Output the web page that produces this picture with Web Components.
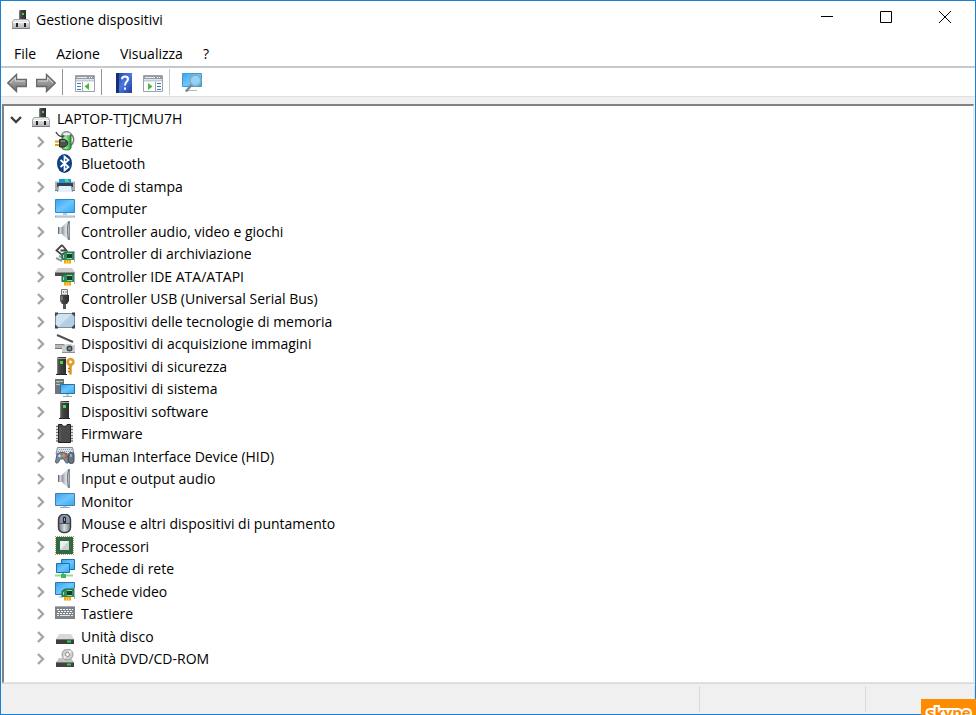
<!DOCTYPE html>
<html lang="it">
<head>
<meta charset="utf-8">
<title>Gestione dispositivi</title>
<style>
  html, body { height: 100%; margin: 0; }
  body { font: 14px/20px "Open Sans", "Noto Sans", sans-serif; color: #000; background: #fff; overflow: hidden; }
</style>
</head>
<body>

<dm-window>
  <dm-title-bar slot="title">Gestione dispositivi</dm-title-bar>
  <dm-menu-bar slot="menu">
    <dm-menu-item>File</dm-menu-item>
    <dm-menu-item>Azione</dm-menu-item>
    <dm-menu-item>Visualizza</dm-menu-item>
    <dm-menu-item>?</dm-menu-item>
  </dm-menu-bar>
  <dm-toolbar slot="toolbar">
    <dm-tool icon="back" label="Indietro"></dm-tool>
    <dm-tool icon="forward" label="Avanti"></dm-tool>
    <dm-separator></dm-separator>
    <dm-tool icon="pane-left" label="Mostra/Nascondi albero"></dm-tool>
    <dm-separator></dm-separator>
    <dm-tool icon="help" label="Guida"></dm-tool>
    <dm-tool icon="pane-right" label="Mostra/Nascondi azioni"></dm-tool>
    <dm-separator light></dm-separator>
    <dm-tool icon="scan" label="Rileva modifiche hardware"></dm-tool>
  </dm-toolbar>
  <dm-tree>
    <dm-node icon="root" open>LAPTOP-TTJCMU7H
      <dm-node slot="items" icon="battery">Batterie</dm-node>
      <dm-node slot="items" icon="bluetooth">Bluetooth</dm-node>
      <dm-node slot="items" icon="printer">Code di stampa</dm-node>
      <dm-node slot="items" icon="computer">Computer</dm-node>
      <dm-node slot="items" icon="speaker">Controller audio, video e giochi</dm-node>
      <dm-node slot="items" icon="storage">Controller di archiviazione</dm-node>
      <dm-node slot="items" icon="ide">Controller IDE ATA/ATAPI</dm-node>
      <dm-node slot="items" icon="usb">Controller USB (Universal Serial Bus)</dm-node>
      <dm-node slot="items" icon="memory">Dispositivi delle tecnologie di memoria</dm-node>
      <dm-node slot="items" icon="imaging">Dispositivi di acquisizione immagini</dm-node>
      <dm-node slot="items" icon="security">Dispositivi di sicurezza</dm-node>
      <dm-node slot="items" icon="system">Dispositivi di sistema</dm-node>
      <dm-node slot="items" icon="software">Dispositivi software</dm-node>
      <dm-node slot="items" icon="firmware">Firmware</dm-node>
      <dm-node slot="items" icon="hid">Human Interface Device (HID)</dm-node>
      <dm-node slot="items" icon="speaker">Input e output audio</dm-node>
      <dm-node slot="items" icon="monitor">Monitor</dm-node>
      <dm-node slot="items" icon="mouse">Mouse e altri dispositivi di puntamento</dm-node>
      <dm-node slot="items" icon="cpu">Processori</dm-node>
      <dm-node slot="items" icon="network">Schede di rete</dm-node>
      <dm-node slot="items" icon="video">Schede video</dm-node>
      <dm-node slot="items" icon="keyboard">Tastiere</dm-node>
      <dm-node slot="items" icon="disk">Unità disco</dm-node>
      <dm-node slot="items" icon="dvd">Unità DVD/CD-ROM</dm-node>
    </dm-node>
  </dm-tree>
  <dm-status-bar slot="status"></dm-status-bar>
</dm-window>
<dm-badge>skype</dm-badge>

<script>
// gradients shared by the icons, copied into each svg
const DEFS = `<defs>
  <linearGradient id="sky" x1="0" y1="0" x2="1" y2="1"><stop offset="0" stop-color="#3aa2ee"/><stop offset=".5" stop-color="#6cc6ff"/><stop offset="1" stop-color="#35a7f4"/></linearGradient>
  <linearGradient id="metal" x1="0" y1="0" x2="0" y2="1"><stop offset="0" stop-color="#f2f2f2"/><stop offset="1" stop-color="#b4b4b8"/></linearGradient>
  <linearGradient id="side" x1="0" y1="0" x2="1" y2="0"><stop offset="0" stop-color="#6c7680"/><stop offset=".5" stop-color="#d4d9de"/><stop offset="1" stop-color="#767f88"/></linearGradient>
  <linearGradient id="cone" x1="0" y1="0" x2="1" y2="0"><stop offset="0" stop-color="#8d959c"/><stop offset=".5" stop-color="#dfe3e6"/><stop offset="1" stop-color="#a3abb2"/></linearGradient>
  <linearGradient id="dark" x1="0" y1="0" x2="1" y2="0"><stop offset="0" stop-color="#6a6a6a"/><stop offset=".3" stop-color="#454545"/><stop offset="1" stop-color="#2c2c2c"/></linearGradient>
  <linearGradient id="leaf" x1="0" y1="0" x2="1" y2="0"><stop offset="0" stop-color="#2fae3a"/><stop offset=".4" stop-color="#9af59a"/><stop offset="1" stop-color="#259338"/></linearGradient>
  <linearGradient id="arrow" x1="0" y1="0" x2="0" y2="1"><stop offset="0" stop-color="#c4c4c4"/><stop offset="1" stop-color="#6d6d6d"/></linearGradient>
  <linearGradient id="navy" x1="0" y1="0" x2="1" y2="1"><stop offset="0" stop-color="#1e3f9c"/><stop offset=".5" stop-color="#4a78e0"/><stop offset="1" stop-color="#1d3ca0"/></linearGradient>
</defs>`;

const CARD = `<path d="M7 10 10 8H19V16H7Z" fill="#2f8d57"/><path d="M7 16 7 10 10 8H19" fill="none" stroke="#1d6a3e"/><path d="M19.500 7v11" stroke="#a9afb2"/><path d="M12 10H17V14H12Z" fill="#173d2c"/><path d="M8.500 11v3M12 9.500h5M12 14.500h5" stroke="#8fdcaa"/><path d="M9 16h7v3.500H9z" fill="#f3a712"/><path d="M11.500 16.500v2.500M13.500 16.500v2.500" stroke="#ffd24a"/>`;

const TOWER = `<path d="M5 1 6 0H14V17H5Z" fill="url(#dark)"/><path d="M5.500 1.500H14" stroke="#a2a2a2"/><path d="M8 4h3v3H8z" fill="#37e23c"/><path d="M5.500 2V16" stroke="#7a7a7a"/><path d="M4 17.500H15" stroke="#25252b"/>`;

const PANE = `<path d="M.5 2.500H19.500V18.500H.5Z" fill="#fff" stroke="#9aa2aa"/><path d="M1 3H19V6H1Z" fill="#929ba4"/><path d="M2 4.500h10" stroke="#e8edf2"/><path d="M14 4.500h1M16 4.500h1" stroke="#fff"/><path d="M1 7.500H19" stroke="#c3cad0" stroke-width="2"/>`;

const ICONS = {
  root: `<path d="M8 1 9 0H15V10H8Z" fill="url(#dark)"/><path d="M8.500 1V10" stroke="#777"/><path d="M11 3h2v2h-2z" fill="#36df37"/><path d="M3 9.500H17L18.500 12V18.500H1.500V12Z" fill="url(#metal)" stroke="#a5a5a9"/><path d="M1 18.500H19" stroke="#7c7c84"/><path d="M2 12.500H18" stroke="#fafafa"/><path d="M6 13v4M14 13v4" stroke="#222" stroke-width="2"/>`,
  battery: `<path d="M15 3c5 2 5 10-1 12" fill="none" stroke="#777" stroke-width="1.500"/><path d="M7 3C7 0 16 0 16 3V17C16 19.500 7 19.500 7 17Z" fill="url(#leaf)" stroke="#247331"/><ellipse cx="11.500" cy="3" rx="4" ry="2" fill="#eee" stroke="#999"/><path d="M1 1C3 5 6 6 9 5" fill="none" stroke="#444" stroke-width="1.500"/><path d="M0 10.500H5M0 14H5" stroke="#d4a514" stroke-width="2"/><path d="M4.500 8.500H9C14 9 14 15 9 16H4.500Z" fill="#505050" stroke="#2c2c2c"/><path d="M6 10H10" stroke="#aaa"/>`,
  bluetooth: `<ellipse cx="9.500" cy="9.500" rx="7.500" ry="9.500" fill="#12387a"/><ellipse cx="9.500" cy="9" rx="6.500" ry="8" fill="#0f4489"/><path d="M5.500 6 13.500 13 9.500 16.500V2.500L13.500 6 5.500 13" fill="none" stroke="#fff" stroke-width="1.700"/>`,
  printer: `<path d="M0 5H4V15H0ZM16 5H20V15H16Z" fill="#a9afb4"/><path d="M0 5.500H4M16 5.500H20" stroke="#d8dcdf"/><path d="M4 3H16V8H4Z" fill="#1696ec"/><path d="M10 3h3l1 3h-4z" fill="#55da70"/><path d="M2 7H18V11H2Z" fill="#3a4046"/><path d="M4 10H16L17 16H3Z" fill="#e3f1fa"/><path d="M4 10.500H3.500L2.500 16M16.500 10.500 17.500 16" fill="none" stroke="#8fa6b5"/><path d="M0 14.500H3M17 14.500H20" stroke="#747c83"/>`,
  computer: `<path d="M.5.500H19.500V13.500H.5Z" fill="url(#sky)" stroke="#328bc8"/><path d="M8 14H12V16H8Z" fill="#b9cbd8"/><path d="M0 17.500H20" stroke="#8fabbe" stroke-width="2"/><path d="M1 17H19" stroke="#d5e7f2"/>`,
  monitor: `<path d="M.5 2.500H19.500V14.500H.5Z" fill="url(#sky)" stroke="#487fa8"/><path d="M8 15H12V16H8Z" fill="#b9cbd8"/><path d="M5 16.500H15" stroke="#91adc0"/>`,
  speaker: `<path d="M3 6H8V13H3Z" fill="url(#side)"/><path d="M3.500 6V13" stroke="#6a7178"/><path d="M7 6 13 0H15V19H13L7 13Z" fill="url(#cone)"/><path d="M14 0C12 5 12 14 14 19" fill="none" stroke="#69727a"/><path d="M14.500 0V19" stroke="#868e95"/>`,
  storage: `<path d="M7 1 1.500 6.500 7 11 9 9.500M5.500 6.500H11.500L7 1" fill="none" stroke="#464646" stroke-width="1.800"/><path d="M1 14 7 17M4 12l4 2" stroke="#9a9a9a" stroke-width="2"/><g>${CARD}</g>`,
  ide: `<path d="M3 2H17L20 6H0Z" fill="#cfcfcf"/><path d="M0 6H20V10H0Z" fill="#4c4c4c"/><path d="M0 6.500H20" stroke="#8c8c8c"/><g>${CARD}</g>`,
  usb: `<path d="M6.500.500H12.500V6H6.500Z" fill="#ececec" stroke="#777"/><path d="M8 3h1M10.500 3h1" stroke="#333"/><path d="M5 6H14V12L12 15H7L5 12Z" fill="url(#dark)"/><path d="M9.500 15V20" stroke="#555" stroke-width="3"/><path d="M7 7V11" stroke="#999"/>`,
  memory: `<rect x=".5" y="2.500" width="19" height="14" rx="2" fill="#b3cfe3" stroke="#7c8d9b"/><path d="M1 3H17L3 16H1Z" fill="#cfe3f1"/><path d="M.5 5V2.500H3M17 2.500H19.500V5M19.500 14V16.500H17M3 16.500H.5V14" fill="none" stroke="#384047" stroke-width="2"/>`,
  imaging: `<path d="M2 1 18 8" stroke="#555" stroke-width="2"/><path d="M0 10H10V15H0Z" fill="#b7b7b7"/><path d="M0 10.500H9" stroke="#8a8a8a"/><path d="M0 14.500H7" stroke="#777"/><path d="M7 12H10L11 10H16L17 11H20V19H7Z" fill="#cdcdcd"/><path d="M7 18.500H20" stroke="#8f8f8f"/><circle cx="14.500" cy="14.500" r="3" fill="#3b454a"/><circle cx="14.500" cy="14.500" r="1.500" fill="#6e9db0"/>`,
  security: `<g transform="translate(-3 1)">${TOWER}</g><circle cx="15.500" cy="6" r="2.800" fill="none" stroke="#e0a22c" stroke-width="2.800"/><path d="M15.500 9V18.500" stroke="#d99722" stroke-width="2.500"/><path d="M13 12.500h2M13 15.500h2" stroke="#bd7b18" stroke-width="1.500"/>`,
  system: `<path d="M0 0H9V15H0Z" fill="#6d747a"/><path d="M1 2.500H8M1 5.500H6" stroke="#b9c0c5"/><path d="M2 3.500h2" stroke="#37de41"/><path d="M5.500 5.500H19.500V14.500H5.500Z" fill="url(#sky)" stroke="#27719f"/><path d="M11 15h3v2h-3z" fill="#c0d0da"/><path d="M8 17.500H17" stroke="#93aabb"/>`,
  software: TOWER,
  firmware: `<path d="M1 2.500H18M1 5.500H18M1 8.500H18M1 11.500H18M1 14.500H18M1 17H18" stroke="#777" stroke-width="1.500"/><path d="M3.500.500H7C7 3 12 3 12 .5H15.500V18.500H3.500Z" fill="#4b4b4b" stroke="#222"/><path d="M5 4V17" stroke="#696969"/>`,
  hid: `<path d="M2.500 1.500H17.500L19 8H1Z" fill="#dce2e6" stroke="#7d8c97"/><path d="M4 3.500H17M3 5.500H17" stroke="#8e9ba6" stroke-dasharray="1 1"/><path d="M2 8C4 6 10 6 12 8L13.500 16C12 19 10 16 9 13H5C4 16 2 19 .5 16Z" fill="#788796" stroke="#52616f"/><rect x="13.500" y="6.500" width="5.500" height="11" rx="2.500" fill="#65727f" stroke="#45515c"/><path d="M3 10h3M4.500 8.500v3" stroke="#e6edf2"/><path d="M4 12h2" stroke="#26a2ed" stroke-width="2"/><circle cx="8.500" cy="9.500" r="1.500" fill="#f48622"/><circle cx="11" cy="11" r="1.300" fill="#e94c35"/><path d="M16 8v3" stroke="#d9e0e6"/>`,
  mouse: `<rect x="3.500" y=".5" width="12" height="18" rx="5" fill="url(#side)" stroke="#343b43" stroke-width="1.400"/><path d="M5 7C5 0 14 0 14 7V9H5Z" fill="#8793a0"/><path d="M4 9.500H15" stroke="#4c5966"/><rect x="8" y="2.500" width="3" height="7" rx="1.500" fill="#202a35"/><path d="M9.500 4v3" stroke="#9caab7"/>`,
  cpu: `<path d="M0 .5H19M0 18.500H19M.5 0V19M18.500 0V19" stroke="#b89c42" stroke-dasharray="1 1"/><path d="M1 1H18V18H1Z" fill="#32684a"/><path d="M5 5H14V14H5Z" fill="#cfd1d0"/><path d="M5 14V5H14Z" fill="#ececec"/>`,
  network: `<path d="M6.500.500H19.500V10.500H6.500Z" fill="url(#sky)" stroke="#1774b1"/><path d="M1.500 4.500H14.500V13.500H1.500Z" fill="url(#sky)" stroke="#1774b1"/><path d="M7 14H9V16H7Z" fill="#8fa99a"/><path d="M0 16.500H18" stroke="#8fdc9a" stroke-width="2"/><path d="M6 15H11V19H6Z" fill="#42b559"/>`,
  video: `<path d="M.5 1.500H19.500V13.500H.5Z" fill="url(#sky)" stroke="#3277a5"/><path d="M4 16H8" stroke="#9cadba"/><g>${CARD}</g>`,
  keyboard: `<path d="M0 2H20V15H0Z" fill="#7d848a"/><path d="M0 2.500H20" stroke="#a9b0b6"/><path d="M2 5.500H18M3 7.500H18M2 9.500H18" stroke="#fff" stroke-dasharray="2 1"/><path d="M2 11.500H4M5 11.500H15M16 11.500H18" stroke="#e4e6e8"/>`,
  disk: `<path d="M4 8H16L19 13H1Z" fill="#d8d8d9"/><path d="M1 13H19V18H1Z" fill="#3c3f40"/><path d="M1 13.500H19" stroke="#777"/><path d="M12 15.500H16" stroke="#29d646" stroke-width="2"/>`,
  dvd: `<path d="M4 9H16L19 13.500H1Z" fill="#c4c4c4"/><circle cx="12.500" cy="5.500" r="5.500" fill="#cfcfcf" stroke="#999"/><path d="M12.500 5.500 16 2M12.500 5.500 9 9" stroke="#f2f2f2" stroke-width="2"/><circle cx="12.500" cy="5.500" r="2" fill="#fff" stroke="#888"/><path d="M1 13H19V18H1Z" fill="#414345"/><path d="M1 13.500H19" stroke="#777"/><path d="M12 15.500H16" stroke="#30d54b" stroke-width="2"/>`,
  back: `<path d="M.7 10 9.500 1.500V6.500H19.500V13.500H9.500V18.500Z" fill="url(#arrow)" stroke="#696969" stroke-width="1.400"/><path d="M3 10 8.500 4.500V8H18" fill="none" stroke="#d5d5d5"/>`,
  forward: `<path d="M19.300 10 10.500 1.500V6.500H.5V13.500H10.500V18.500Z" fill="url(#arrow)" stroke="#696969" stroke-width="1.400"/><path d="M2 8H11.500V4.500L17 10" fill="none" stroke="#d5d5d5"/>`,
  'pane-left': `${PANE}<path d="M2 10.500H6M2 13.500H6M2 16.500H6" stroke="#3c78b8"/><path d="M7.500 9V18" stroke="#9da8b2"/><path d="M14 10V17L9.500 13.500Z" fill="#42bd35"/>`,
  'pane-right': `${PANE}<path d="M14 10.500H18M14 13.500H18M14 16.500H18" stroke="#3c78b8"/><path d="M12.500 9V18" stroke="#9da8b2"/><path d="M5 10V17L9.500 13.500Z" fill="#42bd35"/>`,
  help: `<path d="M2 0H18V20H2Z" fill="url(#navy)"/><path d="M3.500 0V20" stroke="#172f78" stroke-width="3"/><path d="M8 6.200C8 2.500 14 2.500 14 6.200C14 8.500 11 9 11 12.500" fill="none" stroke="#fff" stroke-width="2"/><path d="M11 14.500v2.300" stroke="#fff" stroke-width="2"/>`,
  scan: `<path d="M.5.500H19.500V13.500H.5Z" fill="url(#sky)" stroke="#3d9cd2"/><path d="M3 17.500H15" stroke="#a8bcc7"/><circle cx="13.500" cy="7.500" r="5.500" fill="#9ed7f8" fill-opacity=".8" stroke="#86a9bd" stroke-width="1.500"/><path d="M9.500 12 4 18.500" stroke="#788b96" stroke-width="2.500"/>`
};

function define(name, html, setup) {
  const tmpl = document.createElement('template');
  tmpl.innerHTML = html;
  customElements.define(name, class extends HTMLElement {
    constructor() {
      super();
      this.attachShadow({mode: 'open'}).appendChild(tmpl.content.cloneNode(true));
    }
    connectedCallback() {
      if (setup) setup(this, this.shadowRoot);
    }
  });
}

define('dm-icon', `
  <style>
    :host { display: block; flex: none; width: 20px; height: 20px; }
    svg { display: block; width: 100%; height: 100%; }
  </style>
  <svg viewBox="0 0 20 20" aria-hidden="true"></svg>
`, (el, root) => {
  root.querySelector('svg').innerHTML = DEFS + (ICONS[el.getAttribute('name')] || '');
});

define('dm-window', `
  <style>
    :host { display: flex; flex-direction: column; box-sizing: border-box; height: 100vh; border: 1px solid #1a80d3; background: #fff; }
    main { flex: 1; min-height: 0; display: flex; padding: 7px 1px 0; background: #f0f0f0; border-top: 1px solid #e0e0e0; }
  </style>
  <slot name="title"></slot>
  <slot name="menu"></slot>
  <slot name="toolbar"></slot>
  <main><slot></slot></main>
  <slot name="status"></slot>
`);

define('dm-title-bar', `
  <style>
    :host { display: flex; justify-content: space-between; height: 38px; }
    h1 { display: flex; align-items: center; gap: 5px; margin: 0; padding-left: 10px; font: inherit; }
    nav { display: flex; height: 32px; }
    button { width: 59px; padding: 0; border: 0; background: none; }
    button:hover { background: #e5e5e5; }
    svg { display: block; margin: auto; fill: none; stroke: #000; }
  </style>
  <h1><dm-icon name="root"></dm-icon><slot></slot></h1>
  <nav>
    <button aria-label="Riduci a icona"><svg width="13" height="12"><path d="M0 5.500H12"/></svg></button>
    <button aria-label="Ingrandisci"><svg width="13" height="12"><path d="M.5.500H11.500V11.500H.5Z"/></svg></button>
    <button aria-label="Chiudi"><svg width="13" height="12"><path d="M0 0 12 12M12 0 0 12"/></svg></button>
  </nav>
`);

define('dm-menu-bar', `
  <style>
    :host { display: flex; gap: 4px; box-sizing: border-box; height: 29px; padding: 2px 0 0 5px; border-bottom: 2px solid #c3c9cd; }
  </style>
  <slot></slot>
`);

define('dm-menu-item', `
  <style>
    :host { display: flex; }
    button { padding: 0 8px; border: 0; background: none; font: inherit; color: inherit; }
    button:hover { background: #e5f3ff; }
  </style>
  <button><slot></slot></button>
`);

define('dm-toolbar', `
  <style>
    :host { display: flex; align-items: center; gap: 9px; height: 28px; padding: 0 6px; }
  </style>
  <slot></slot>
`);

define('dm-tool', `
  <style>
    :host { display: block; margin-top: 2px; }
    button { display: block; padding: 0; border: 0; background: none; }
  </style>
  <button></button>
`, (el, root) => {
  const button = root.querySelector('button');
  button.setAttribute('aria-label', el.getAttribute('label'));
  const icon = document.createElement('dm-icon');
  icon.setAttribute('name', el.getAttribute('icon'));
  button.replaceChildren(icon);
});

define('dm-separator', `
  <style>
    :host { display: block; width: 1px; height: 26px; margin: 0 3px 0 -3px; background: #929292; }
    :host([light]) { background: #c8c8c8; }
  </style>
`);

define('dm-tree', `
  <style>
    :host { display: block; flex: 1; min-width: 0; overflow: hidden; padding: 1px 4px; background: #fff;
      border-style: solid; border-width: 2px 1px 1px 2px; border-color: #828282 #e3e3e3 #e3e3e3 #828282; }
  </style>
  <slot></slot>
`);

define('dm-node', `
  <style>
    :host { display: block; }
    .row { display: flex; align-items: center; height: var(--row, 23px); white-space: nowrap; }
    button { width: 16px; height: 16px; margin-right: 7px; padding: 0; border: 0; background: none; }
    button svg { display: block; width: 16px; height: 16px; fill: none; stroke: #a6a6a6; stroke-width: 2.4; }
    :host([open]) button svg { stroke: #404040; transform: rotate(90deg); }
    dm-icon { align-self: flex-start; margin: 1px 6px 0 0; }
    .items { display: none; padding-left: 24px; }
    :host([open]) .items { display: block; }
    /* two rows take 45px */
    ::slotted(dm-node:nth-child(even)) { --row: 22px; }
    ::slotted(dm-node:nth-child(odd)) { --row: 23px; }
  </style>
  <div class="row"><button aria-label="Espandi"><svg viewBox="0 0 16 16"><path d="M6 3 11 8 6 13"/></svg></button><span><slot></slot></span></div>
  <div class="items"><slot name="items"></slot></div>
`, (el, root) => {
  const icon = document.createElement('dm-icon');
  icon.setAttribute('name', el.getAttribute('icon'));
  root.querySelector('button').after(icon);
  root.querySelector('button').onclick = () => el.toggleAttribute('open');
});

define('dm-status-bar', `
  <style>
    :host { display: grid; grid-template-columns: 1fr 166px 109px; height: 28px; padding-top: 2px; background: #f0f0f0; border-top: 1px solid #d9d9d9; }
    div { margin-bottom: 2px; border-right: 1px solid #dadada; }
  </style>
  <div></div><div></div><div></div>
`);

// taskbar badge that lies over the window's corner
define('dm-badge', `
  <style>
    :host { position: fixed; right: 0; bottom: 0; box-sizing: border-box; width: 55px; height: 16px; padding-left: 6px; overflow: hidden;
      background: #ff8c00; color: #ff8c00; font: bold 15px/26px "Open Sans", sans-serif;
      -webkit-text-stroke: 4px #fff; paint-order: stroke fill; }
  </style>
  <slot></slot>
`);
</script>
</body>
</html>
